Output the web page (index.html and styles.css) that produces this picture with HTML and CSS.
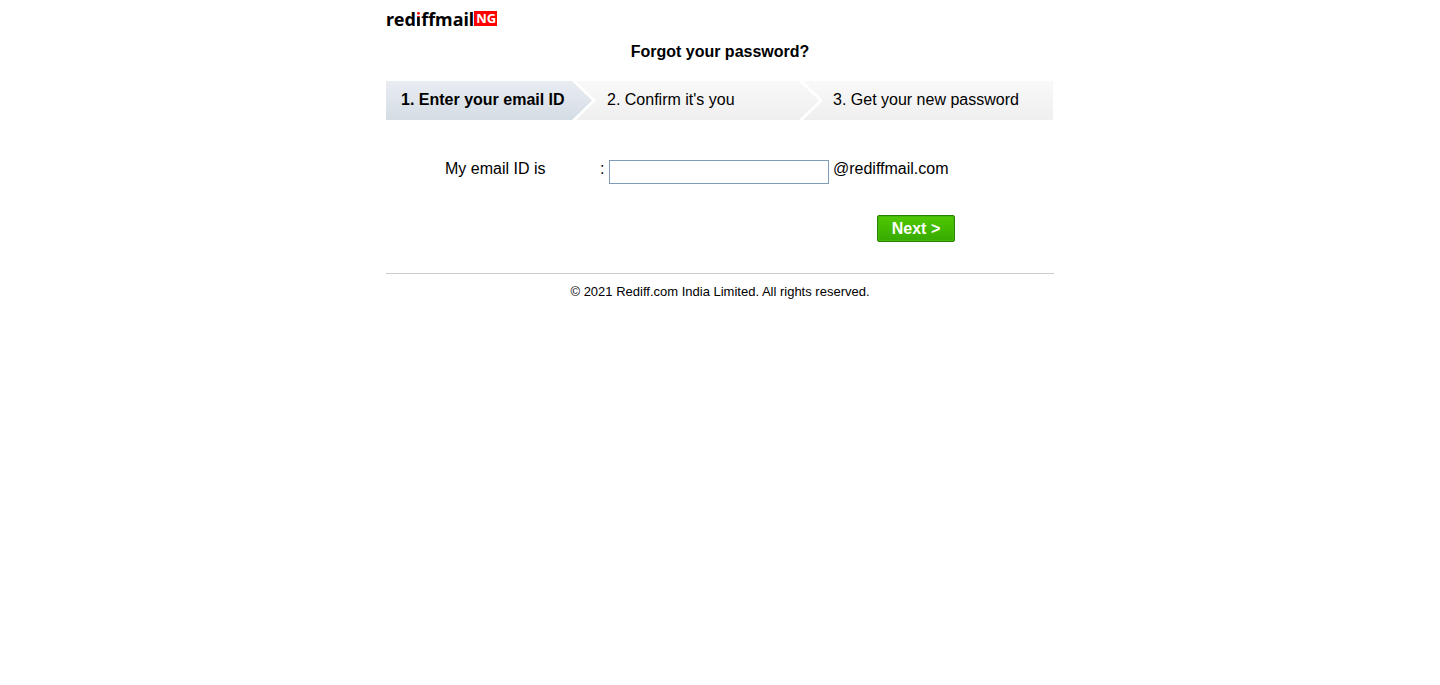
FILE: index.html
```html
<!DOCTYPE html>
<html lang="en">
<head>
<meta charset="utf-8">
<meta name="viewport" content="width=device-width, initial-scale=1">
<title>Forgot your password?</title>
<link rel="stylesheet" href="styles.css">
</head>
<body>
<div class="page">
  <header class="logo"><span class="logo-name">red<span class="logo-dot">i</span>ffmail</span><span class="logo-tag">NG</span></header>
  <main>
    <h1 class="title">Forgot your password?</h1>
    <ol class="steps">
      <li class="step step-first">1. Enter your email ID</li>
      <li class="step step-middle">2. Confirm it's you</li>
      <li class="step step-last">3. Get your new password</li>
    </ol>
    <form class="form">
      <div class="field">
        <label class="label" for="email">My email ID is</label>
        <span class="colon">:</span>
        <input class="input" id="email" name="email" type="text">
        <span class="domain">@rediffmail.com</span>
      </div>
      <div class="actions"><button class="next" type="submit">Next &gt;</button></div>
    </form>
  </main>
  <footer class="footer">© 2021 Rediff.com India Limited. All rights reserved.</footer>
</div>
</body>
</html>
```
FILE: styles.css
```css
* { box-sizing: border-box; }
body {
  margin: 0;
  background: #fff;
  color: #000;
  font: 16px/18px "Liberation Sans", Arial, sans-serif;
}
.page {
  max-width: 668px;
  margin: 0 auto;
  padding-top: 11px;
}
.logo {
  display: flex;
  align-items: flex-start;
  font-family: "Noto Sans", "Open Sans", sans-serif;
  font-weight: 700;
}
.logo-name { font-size: 18px; line-height: 16px; }
.logo-dot {
  background: linear-gradient(#f00 0 10px, #000 10px);
  background-clip: text;
  -webkit-background-clip: text;
  color: transparent;
}
.logo-tag {
  padding: 0 1px 0 2px;
  background: #f00;
  color: #fff;
  font-size: 13px;
  line-height: 15px;
}
.title {
  margin: 16px 0 20px;
  font-size: 16px;
  line-height: 18px;
  text-align: center;
}
.steps {
  display: grid;
  grid-template-columns: 190fr 227fr 250fr;
  margin: 0;
  padding: 0 1px 0 0;
  list-style: none;
}
.step {
  height: 39px;
  line-height: 37px;
  white-space: nowrap;
  background: linear-gradient(#f9f9f9, #efefef);
}
.step-first {
  margin-right: -16px;
  padding-left: 15px;
  font-weight: 700;
  background: linear-gradient(#e9edf2, #d4dce4);
  clip-path: polygon(0 0, calc(100% - 20px) 0, 100% 50%, calc(100% - 20px) 100%, 0 100%);
}
.step-middle {
  margin-right: -16px;
  padding-left: 31px;
  clip-path: polygon(0 0, calc(100% - 20px) 0, 100% 50%, calc(100% - 20px) 100%, 0 100%, 20px 50%);
}
.step-last {
  padding-left: 30px;
  clip-path: polygon(0 0, 100% 0, 100% 100%, 0 100%, 20px 50%);
}
.form { padding: 40px 0 31px 59px; }
.field { display: flex; align-items: flex-start; }
.label { width: 155px; }
.colon { width: 9px; }
.input {
  width: 220px;
  height: 24px;
  margin-right: 4px;
  padding: 1px 2px;
  border: 1px solid #7f9db9;
  border-radius: 0;
  background: #fff;
  font: inherit;
}
.actions {
  display: flex;
  justify-content: flex-end;
  margin-top: 31px;
  padding-right: 99px;
}
.next {
  width: 78px;
  height: 27px;
  padding: 0;
  border: 1px solid #278200;
  border-radius: 2px;
  background: linear-gradient(#50c900, #36a900);
  box-shadow: inset 0 0 0 1px #45b80a;
  color: #fff;
  font: 700 16px/25px "Liberation Sans", Arial, sans-serif;
}
.footer {
  padding-top: 10px;
  border-top: 1px solid #ccc;
  font-size: 13px;
  line-height: 16px;
  text-align: center;
}
```
